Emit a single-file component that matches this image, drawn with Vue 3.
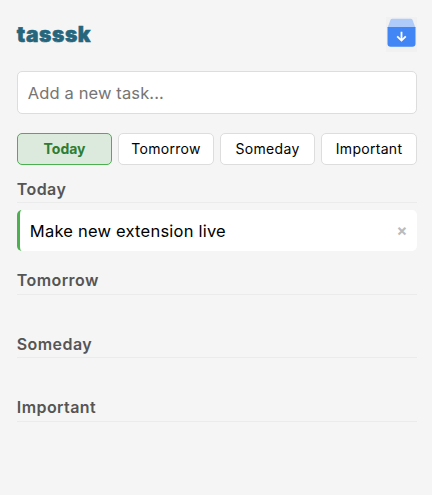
<script setup>
import { ref } from 'vue'

const categories = ['Today', 'Tomorrow', 'Someday', 'Important']
const active = ref('Today')
const draft = ref('')
const tasks = ref([{ id: 1, text: 'Make new extension live', category: 'Today' }])

const tasksFor = (category) => tasks.value.filter((task) => task.category === category)

function addTask() {
  const text = draft.value.trim()
  if (!text) return
  tasks.value.push({ id: Date.now(), text, category: active.value })
  draft.value = ''
}

function removeTask(id) {
  tasks.value = tasks.value.filter((task) => task.id !== id)
}
</script>

<template>
  <main class="popup">
    <header class="header">
      <h1 class="logo">tasssk</h1>
      <button class="archive" aria-label="Archive">
        <svg width="31" height="35" viewBox="0 0 31 35">
          <rect width="31" height="35" fill="#f1f1f1" />
          <path d="M6.3 1.700h18.400a2 2 0 0 1 1.800 1.100L29.500 11h-28l3-8.200A2 2 0 0 1 6.300 1.700z" fill="#aecbfa" />
          <path d="M1.500 10h28v16.500a3.200 3.200 0 0 1-3.200 3.200H4.700a3.200 3.200 0 0 1-3.200-3.200z" fill="#4285f4" />
          <path d="M15.500 14.800v8.600M11.200 19.400l4.300 4.200 4.300-4.200" fill="none" stroke="#fff" stroke-width="1.800" />
        </svg>
      </button>
    </header>

    <input v-model="draft" class="entry" placeholder="Add a new task..." @keyup.enter="addTask" />

    <nav class="tabs">
      <button
        v-for="category in categories"
        :key="category"
        class="tab"
        :class="{ active: category === active }"
        @click="active = category"
      >{{ category }}</button>
    </nav>

    <section v-for="category in categories" :key="category" class="section">
      <h2 class="title">{{ category }}</h2>
      <ul class="list">
        <li v-for="task in tasksFor(category)" :key="task.id" class="task">
          <span class="text">{{ task.text }}</span>
          <button class="remove" aria-label="Remove" @click="removeTask(task.id)">×</button>
        </li>
      </ul>
    </section>
  </main>
</template>

<style>
body {
  background: #f5f5f5;
}
</style>

<style scoped>
.popup {
  box-sizing: border-box;
  min-height: 495px;
  padding: 17px 15.2px 0 16.8px;
  background: #f5f5f5;
  font-family: Inter, "Liberation Sans", sans-serif;
  color: #000;
}
button,
input {
  font-family: inherit;
}
.header {
  display: flex;
  justify-content: space-between;
  height: 35px;
}
.logo {
  margin: 0;
  font-size: 21px;
  line-height: 35px;
  font-weight: 900;
  letter-spacing: 0.6px;
  -webkit-text-stroke: 0.5px #26667c;
  color: #26667c;
}
.archive {
  padding: 0;
  border: 0;
  background: none;
  width: 31px;
  height: 35px;
}
.archive svg {
  display: block;
}
.entry {
  display: block;
  box-sizing: border-box;
  width: 100%;
  height: 43px;
  margin: 19px 0;
  padding: 0 10px;
  border: 1px solid #ddd;
  border-radius: 5px;
  background: #fff;
  font-size: 16.5px;
  letter-spacing: 0.12px;
  outline: none;
}
.entry::placeholder {
  color: #757575;
}
.tabs {
  display: grid;
  grid-template-columns: repeat(4, 1fr);
  gap: 6px;
}
.tab {
  height: 32px;
  padding: 0 0 1px;
  border: 1px solid #ddd;
  border-radius: 5px;
  background: #fff;
  color: #000;
  font-size: 14px;
  letter-spacing: 0.3px;
}
.tab.active {
  border-color: #4caf50;
  background: #dce9dd;
  color: #2e7d32;
  font-weight: 700;
  letter-spacing: 0;
}
.section {
  padding-top: 12.7px;
}
.title {
  box-sizing: border-box;
  height: 25.5px;
  margin: 0 0 6.5px;
  border-bottom: 1px solid #ebebeb;
  font-size: 16px;
  line-height: 22px;
  font-weight: 600;
  letter-spacing: 0.42px;
  color: #555;
}
.list {
  min-height: 18.7px;
  margin: 0;
  padding: 0;
  list-style: none;
}
.task {
  display: flex;
  align-items: center;
  justify-content: space-between;
  box-sizing: border-box;
  height: 41px;
  margin-bottom: 5.9px;
  padding: 0 9.5px 0 10px;
  border-left: 3px solid #4caf50;
  border-radius: 5px;
  background: #fff;
  font-size: 16.5px;
  letter-spacing: 0.22px;
}
.text {
  padding-top: 1px;
}
.remove {
  padding: 0 0 1px;
  border: 0;
  background: none;
  color: #bbb;
  font-size: 16px;
  font-weight: 700;
}
</style>
